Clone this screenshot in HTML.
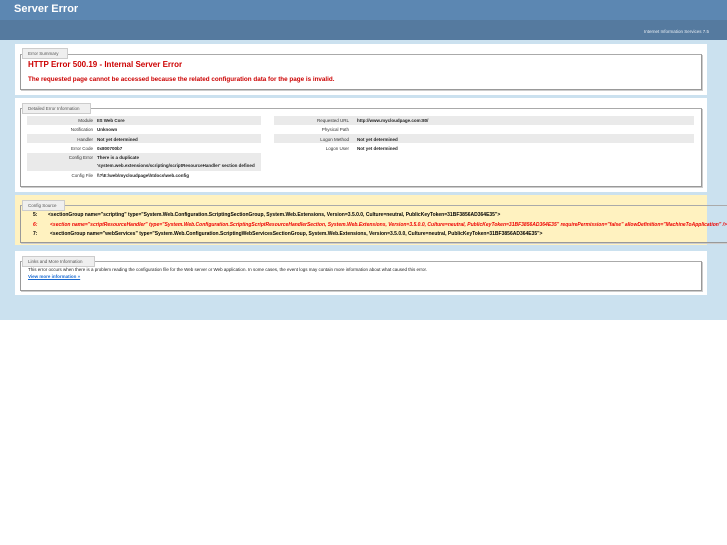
<!DOCTYPE html>
<html><head><style>
*{margin:0;padding:0;box-sizing:border-box}
body{width:727px;height:545px;background:#fff;font-family:"Liberation Sans",sans-serif;position:relative;overflow:hidden}
.a{position:absolute;white-space:nowrap}
.h1{left:0;top:0;width:727px;height:20px;background:#5c87b2}
.h2{left:0;top:20px;width:727px;height:20px;background:#557a9f}
.panel{position:absolute;left:15px;width:692px;background:#fff}
.fs{position:absolute;border:1px solid #999;border-top-color:#aaa;box-shadow:1px 1px 0 #ccc}
.lg{position:absolute;background:#efefef;border:1px solid #ccc;font-size:4.5px;color:#555;padding:0 5px;height:11px;line-height:10px;white-space:nowrap}
.sh{position:absolute;background:#eaeaea;height:9px}
.lb{text-align:right;font-size:4.5px;color:#333}
.v{font-size:4.5px;font-weight:bold;color:#222}
.code{font-size:5px;font-weight:bold;color:#000}
</style></head><body>
<div class="a" style="left:0;top:40px;width:727px;height:280px;background:#cbe1ef"></div>
<div class="a h1"></div><div class="a h2"></div>
<div class="a" style="left:14px;top:3px;font-size:11px;color:#fff;font-weight:bold">Server Error</div>
<div class="a" style="left:644px;top:29px;font-size:4.5px;color:#e8eef5">Internet Information Services 7.5</div>

<div class="panel" style="top:44px;height:51px"></div>
<div class="fs" style="left:20px;top:54px;width:682px;height:36px"></div>
<div class="lg" style="left:22px;top:48px;width:46px">Error Summary</div>
<div class="a" style="left:28px;top:60px;font-size:8px;font-weight:bold;color:#c00">HTTP Error 500.19 - Internal Server Error</div>
<div class="a" style="left:28px;top:76px;font-size:6.3px;font-weight:bold;color:#c00">The requested page cannot be accessed because the related configuration data for the page is invalid.</div>

<div class="panel" style="top:98px;height:94px"></div>
<div class="fs" style="left:20px;top:108px;width:682px;height:79px"></div>
<div class="lg" style="left:22px;top:103px;width:69px">Detailed Error Information</div>
<div class="sh" style="left:27px;top:116px;width:234px"></div>
<div class="sh" style="left:27px;top:134px;width:234px"></div>
<div class="sh" style="left:27px;top:153px;width:234px;height:18px"></div>
<div class="sh" style="left:274px;top:116px;width:420px"></div>
<div class="sh" style="left:274px;top:134px;width:420px"></div>
<div class="a lb" style="left:27px;width:66px;top:118px">Module</div><div class="a v" style="left:97px;top:118px">IIS Web Core</div>
<div class="a lb" style="left:27px;width:66px;top:127px">Notification</div><div class="a v" style="left:97px;top:127px">Unknown</div>
<div class="a lb" style="left:27px;width:66px;top:137px">Handler</div><div class="a v" style="left:97px;top:137px">Not yet determined</div>
<div class="a lb" style="left:27px;width:66px;top:146px">Error Code</div><div class="a v" style="left:97px;top:146px">0x800700b7</div>
<div class="a lb" style="left:27px;width:66px;top:155px">Config Error</div><div class="a v" style="left:97px;top:155px">There is a duplicate</div>
<div class="a v" style="left:97px;top:163px">'system.web.extensions/scripting/scriptResourceHandler' section defined</div>
<div class="a lb" style="left:27px;width:66px;top:173px">Config File</div><div class="a v" style="left:97px;top:173px">\\?\E:\web\mycloudpage\htdocs\web.config</div>
<div class="a lb" style="left:274px;width:75px;top:118px">Requested URL</div><div class="a v" style="left:357px;top:118px">http://www.mycloudpage.com:80/</div>
<div class="a lb" style="left:274px;width:75px;top:127px">Physical Path</div>
<div class="a lb" style="left:274px;width:75px;top:137px">Logon Method</div><div class="a v" style="left:357px;top:137px">Not yet determined</div>
<div class="a lb" style="left:274px;width:75px;top:146px">Logon User</div><div class="a v" style="left:357px;top:146px">Not yet determined</div>

<div class="a" style="left:15px;top:195px;width:692px;height:50px;background:#fff2c0"></div>
<div class="fs" style="left:20px;top:205px;width:720px;height:38px"></div>
<div class="lg" style="left:22px;top:200px;width:43px">Config Source</div>
<div class="a code" style="left:33px;top:212px">5:</div>
<div class="a code" style="left:48px;top:212px">&lt;sectionGroup name="scripting" type="System.Web.Configuration.ScriptingSectionGroup, System.Web.Extensions, Version=3.5.0.0, Culture=neutral, PublicKeyToken=31BF3856AD364E35"&gt;</div>
<div class="a code" style="left:33px;top:222px;color:#e00;font-style:italic">6:</div>
<div class="a code" style="left:50px;top:222px;color:#e00;font-style:italic">&lt;section name="scriptResourceHandler" type="System.Web.Configuration.ScriptingScriptResourceHandlerSection, System.Web.Extensions, Version=3.5.0.0, Culture=neutral, PublicKeyToken=31BF3856AD364E35" requirePermission="false" allowDefinition="MachineToApplication" /&gt;</div>
<div class="a code" style="left:33px;top:231px">7:</div>
<div class="a code" style="left:50px;top:231px">&lt;sectionGroup name="webServices" type="System.Web.Configuration.ScriptingWebServicesSectionGroup, System.Web.Extensions, Version=3.5.0.0, Culture=neutral, PublicKeyToken=31BF3856AD364E35"&gt;</div>

<div class="panel" style="top:251px;height:44px"></div>
<div class="fs" style="left:20px;top:261px;width:682px;height:30px"></div>
<div class="lg" style="left:22px;top:256px;width:73px">Links and More Information</div>
<div class="a" style="left:28px;top:267px;font-size:4.5px;color:#222">This error occurs when there is a problem reading the configuration file for the Web server or Web application. In some cases, the event logs may contain more information about what caused this error.</div>
<div class="a" style="left:28px;top:274px;font-size:4.5px;color:#1a6ad0;font-weight:bold;text-decoration:underline">View more information »</div>
</body></html>
